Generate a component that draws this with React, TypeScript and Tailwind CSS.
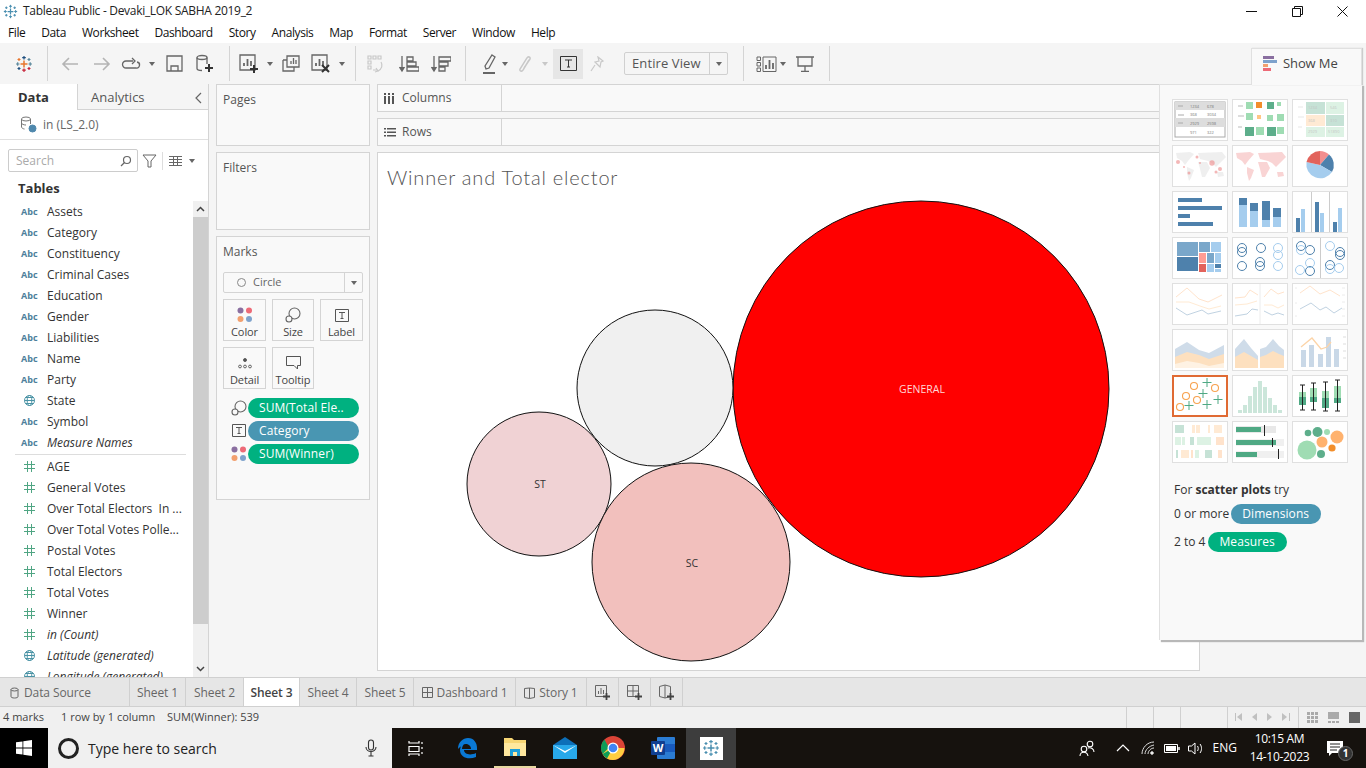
import { ReactNode } from "react";

const dims = ["Assets", "Category", "Constituency", "Criminal Cases", "Education", "Gender", "Liabilities", "Name", "Party", "State", "Symbol", "Measure Names"];
const measures = ["AGE", "General Votes", "Over Total Electors  In ...", "Over Total Votes Polle...", "Postal Votes", "Total Electors", "Total Votes", "Winner", "in (Count)", "Latitude (generated)", "Longitude (generated)"];
const menus = ["File", "Data", "Worksheet", "Dashboard", "Story", "Analysis", "Map", "Format", "Server", "Window", "Help"];

const ui = "font-['Open_Sans',sans-serif]";
const land = "M4 8 18 7l4 2-6 7-3 4-3-4-5-3zM15 22l7 3-3 8-2 3-2-8zM26 8l24-1 4 5-6 6-4 4-4-4-4-2-8-2zM26 17h9l3 6-5 9h-3l-2-8zM45 27h6l1 4-6 1z";

function Caret({ light }: { light?: boolean }) {
  return <span className={`inline-block h-0 w-0 border-x-[3.5px] border-t-[4px] border-x-transparent ${light ? "border-t-[#c8c8c8]" : "border-t-[#666]"}`} />;
}

function Slot({ w, children }: { w: string; children?: ReactNode }) {
  return <div className={`flex h-full shrink-0 items-center justify-center ${w}`}>{children}</div>;
}

function Sep() {
  return <div className="h-[35px] w-px shrink-0 bg-[#d4d4d4]" />;
}

function Ic({ w = 24, h = 24, children }: { w?: number; h?: number; children: ReactNode }) {
  return (
    <svg width={w} height={h} viewBox={`0 0 ${w} ${h}`} fill="none" stroke="#666" strokeWidth="1.3">
      {children}
    </svg>
  );
}

function Plus({ x, y }: { x: number; y: number }) {
  return <path d={`M${x - 4} ${y}h8M${x} ${y - 4}v8`} stroke="#333" strokeWidth="2" />;
}

function TableauLogo({ size = 18, mono }: { size?: number; mono?: boolean }) {
  const a = mono ? "#4a8fb0" : "#e8762d";
  const b = mono ? "#4a8fb0" : "#1f4f7f";
  const c = mono ? "#4a8fb0" : "#c72037";
  const d = mono ? "#4a8fb0" : "#5b879b";
  const e = mono ? "#4a8fb0" : "#59879b";
  return (
    <svg width={size} height={size} viewBox="0 0 18 18" fill="none" strokeWidth="1.2">
      <path d="M9 5.500v7M5.500 9h7" stroke={a} strokeWidth="1.500" />
      <path d="M9 1v3.500M7.200 2.700h3.600" stroke={b} />
      <path d="M9 13.500V17M7.200 15.200h3.600" stroke={c} />
      <path d="M1 9h3.500M2.700 7.200v3.600" stroke={d} />
      <path d="M13.500 9H17M15.200 7.200v3.600" stroke={e} />
      <path d="M4 3v3M2.500 4.500h3" stroke={a} />
      <path d="M14 3v3M12.500 4.500h3" stroke={d} />
      <path d="M4 12v3M2.500 13.500h3" stroke={b} />
      <path d="M14 12v3M12.500 13.500h3" stroke={c} />
    </svg>
  );
}

function Toolbar() {
  return (
    <div className="flex h-[41px] shrink-0 items-center bg-[#f5f5f5]">
      <Slot w="w-[47px]"><TableauLogo /></Slot>
      <Sep />
      <div className="w-[6px] shrink-0" />
      <Slot w="w-[32px]">
        <Ic w={18} h={16}><path d="M17 8H2M8 2 2 8l6 6" stroke="#b4b4b4" strokeWidth="1.600" /></Ic>
      </Slot>
      <Slot w="w-[32px]">
        <Ic w={18} h={16}><path d="M1 8h15M10 2l6 6-6 6" stroke="#b4b4b4" strokeWidth="1.600" /></Ic>
      </Slot>
      <Slot w="w-[26px]">
        <Ic w={20} h={14}><path d="M12 4H5a3 3 0 0 0 0 7h10a3 3 0 0 0 1-6" /><path d="m11 1 3 3-3 3" /></Ic>
      </Slot>
      <Slot w="w-[16px]"><Caret /></Slot>
      <Slot w="w-[28px]">
        <Ic w={17} h={17}><path d="M1 1h15v15H1zM5 16v-5h7v5" /></Ic>
      </Slot>
      <Slot w="w-[34px]">
        <Ic w={22} h={20}><ellipse cx="8" cy="3.500" rx="5" ry="2" /><path d="M3 3.500v11c0 1 1.500 2 5 2M13 3.500V10" /><Plus x={15} y={14} /></Ic>
      </Slot>
      <div className="w-[7px] shrink-0" />
      <Sep />
      <div className="w-[8px] shrink-0" />
      <Slot w="w-[24px]">
        <Ic w={22} h={20}><path d="M1 1h15v15H1z" /><path d="M5 12V9M8.500 12V5M12 12V7" strokeWidth="1.800" /><Plus x={15} y={15} /></Ic>
      </Slot>
      <Slot w="w-[16px]"><Caret /></Slot>
      <Slot w="w-[26px]">
        <Ic w={18} h={17}><path d="M5 1h12v11H5z" /><path d="M1 5h4M1 5v11h11v-4" /><path d="M9 9V6M11.500 9V3M14 9V5" /></Ic>
      </Slot>
      <div className="w-[4px] shrink-0" />
      <Slot w="w-[28px]">
        <Ic w={22} h={20}><path d="M1 1h15v15H1z" /><path d="M5 12V9M8.500 12V5M12 12V7" strokeWidth="1.800" /><path d="m11 11 7 7m0-7-7 7" stroke="#333" strokeWidth="2" /></Ic>
      </Slot>
      <Slot w="w-[12px]"><Caret /></Slot>
      <div className="w-[7px] shrink-0" />
      <Sep />
      <Slot w="w-[40px]">
        <svg width="18" height="18" viewBox="0 0 18 18" fill="none" stroke="#c8c8c8" strokeWidth="1.200"><path d="M1 1h3v3H1zM6 1h3v3H6zM11 1h3v3h-3zM1 6h3v3H1zM1 11h3v3H1zM6 15h4M14 7c2 3 1 7-3 9" /><path d="m9 13 2 3-3 1" /></svg>
      </Slot>
      <Slot w="w-[26px]">
        <Ic w={20} h={18}><path d="M3 1v14M.5 12 3 16l2.500-4" fill="#666" /><path d="M8 2h6v4H8zM8 7h9v4H8zM8 12h12v4H8z" /></Ic>
      </Slot>
      <Slot w="w-[38px]">
        <Ic w={20} h={18}><path d="M3 1v14M.5 12 3 16l2.500-4" fill="#666" /><path d="M8 2h12v4H8zM8 7h9v4H8zM8 12h6v4H8z" /></Ic>
      </Slot>
      <div className="w-[5px] shrink-0" />
      <Sep />
      <div className="w-[11px] shrink-0" />
      <Slot w="w-[24px]">
        <Ic w={14} h={20}><path d="M10 1l3 2-6 11-3 1-1-3z" /><path d="M1 19h12" strokeWidth="2" /></Ic>
      </Slot>
      <Slot w="w-[8px]"><Caret /></Slot>
      <Slot w="w-[32px]">
        <svg width="14" height="18" viewBox="0 0 14 18" fill="none" stroke="#c8c8c8" strokeWidth="1.500"><path d="M11 5 5 15c-1 2-4 1-3-1l7-11c1-2 4-1 3 1l-6 9" /></svg>
      </Slot>
      <Slot w="w-[8px]"><Caret light /></Slot>
      <div className="w-[4px] shrink-0" />
      <div className="flex h-[30px] w-[30px] shrink-0 items-center justify-center bg-[#e6e6e6]">
        <svg width="17" height="15" viewBox="0 0 17 15" fill="none" stroke="#333" strokeWidth="1"><path d="M.5.500h16v14H.500zM5 4h7M8.500 4v7M7 11h3" /></svg>
      </div>
      <Slot w="w-[28px]">
        <svg width="14" height="16" viewBox="0 0 14 16" fill="none" stroke="#c8c8c8" strokeWidth="1.200"><path d="m8 1 5 4-2 1-1 5-5-5 4-1zM5 9l-4 6" /></svg>
      </Slot>
      <div className="w-[13px] shrink-0" />
      <div className="flex h-[23px] w-[104px] shrink-0 items-center rounded-[2px] border border-[#d0d0d0] bg-[#f5f5f5]">
        <span className={`flex-1 pl-[7px] text-[13px] tracking-[0.1px] text-[#555] ${ui}`}>Entire View</span>
        <span className="flex h-full w-[18px] items-center justify-center border-l border-[#d0d0d0]"><Caret /></span>
      </div>
      <div className="w-[15px] shrink-0" />
      <Sep />
      <div className="w-[12px] shrink-0" />
      <Slot w="w-[21px]">
        <Ic w={21} h={16}><path d="M1 1h3.500v3.500H1zM1 6.500h3.500V10H1zM1 12h3.500v3.500H1zM7 1h13v14.500H7z" strokeWidth="1" /><path d="M10 13V9M13.500 13V4M17 13V7" strokeWidth="1.800" /></Ic>
      </Slot>
      <Slot w="w-[12px]"><Caret /></Slot>
      <Slot w="w-[32px]">
        <Ic w={18} h={16}><path d="M0 1h18M2 1v9h14V1M9 10v5M5 15.500h8" /></Ic>
      </Slot>
      <div className="w-[8px] shrink-0" />
      <Sep />
    </div>
  );
}

function FieldIcon({ kind }: { kind: "abc" | "geo" | "num" }) {
  if (kind === "abc") return <span className={`w-[26px] text-[9px] font-bold leading-none text-[#4d7f9b] ${ui}`}>Abc</span>;
  const color = kind === "geo" ? "#4a93a5" : "#4fa583";
  return (
    <span className="flex w-[26px] pl-[3px]">
      {kind === "num" ? (
        <svg width="11" height="11" viewBox="0 0 11 11" fill="none" stroke={color} strokeWidth="1">
          <path d="M3.500 0v11M7.500 0v11M0 3.500h11M0 7.500h11" />
        </svg>
      ) : (
        <svg width="11" height="11" viewBox="0 0 11 11" fill="none" stroke={color} strokeWidth="1">
          <circle cx="5.500" cy="5.500" r="5" />
          <ellipse cx="5.500" cy="5.500" rx="2.300" ry="5" />
          <path d="M.5 5.500h10M1.500 2.500h8M1.500 8.500h8" />
        </svg>
      )}
    </span>
  );
}

function FieldRow({ name, kind, italic }: { name: string; kind: "abc" | "geo" | "num"; italic?: boolean }) {
  return (
    <div className={`flex h-[21px] shrink-0 items-center pl-[21px] text-[12px] text-[#333] ${ui}`}>
      <FieldIcon kind={kind} />
      <span className={`whitespace-pre ${italic ? "italic" : ""}`}>{name}</span>
    </div>
  );
}

function DataPane() {
  return (
    <div className="flex w-[209px] shrink-0 flex-col overflow-hidden border-r border-[#d4d4d4] bg-white">
      <div className={`flex h-[26px] shrink-0 text-[13px] ${ui}`}>
        <div className="flex w-[77px] items-center pl-[18px] pt-[2px] font-bold text-[#333]">Data</div>
        <div className="flex flex-1 items-center justify-between border-b border-l border-[#d4d4d4] bg-[#f5f5f5] pl-[13px] pr-[6px] pt-[2px] text-[#555]">
          <span>Analytics</span>
          <svg width="8" height="12" viewBox="0 0 8 12" fill="none" stroke="#666" strokeWidth="1.200"><path d="M7 1 2 6l5 5" /></svg>
        </div>
      </div>
      <div className={`flex h-[30px] shrink-0 items-center border-b border-[#e0e0e0] pl-[20px] text-[12px] text-[#666] ${ui}`}>
        <svg width="17" height="17" viewBox="0 0 17 17" fill="none" stroke="#777" strokeWidth="1">
          <ellipse cx="6" cy="3" rx="4.500" ry="2" />
          <path d="M1.500 3v8c0 1 2 2 3 2M10.500 3v5M1.500 7c0 1 2 2 4.500 2" />
          <circle cx="12.500" cy="12.500" r="3.500" fill="#4f88ad" stroke="#4f88ad" />
        </svg>
        <span className="ml-[6px]">in (LS_2.0)</span>
      </div>
      <div className="flex h-[41px] shrink-0 items-center pl-[8px]">
        <div className="flex h-[23px] w-[130px] items-center justify-between rounded-[2px] border border-[#ccc] pl-[7px] pr-[5px]">
          <span className={`text-[12px] text-[#aaa] ${ui}`}>Search</span>
          <svg width="12" height="12" viewBox="0 0 12 12" fill="none" stroke="#666" strokeWidth="1.200"><circle cx="7" cy="5" r="3.500" /><path d="M4.500 7.500 1 11" /></svg>
        </div>
        <svg className="ml-[4px]" width="15" height="14" viewBox="0 0 15 14" fill="none" stroke="#666" strokeWidth="1"><path d="M1 1h13L9 7v6H6V7z" /></svg>
        <div className="ml-[5px] h-[18px] w-px bg-[#ddd]" />
        <svg className="ml-[6px]" width="13" height="10" viewBox="0 0 13 10" fill="none" stroke="#666" strokeWidth="1"><path d="M0 .5h13M0 3.500h13M0 6.500h13M0 9.500h13M4.500 0v10M8.500 0v10" /></svg>
        <span className="ml-[7px] flex"><Caret /></span>
      </div>
      <div className={`flex h-[16px] shrink-0 items-center pl-[18px] text-[13px] font-bold text-[#333] ${ui}`}>Tables</div>
      <div className="relative min-h-0 flex-1 overflow-hidden pt-[4px]">
        {dims.map((d, i) => (
          <FieldRow key={d} name={d} kind={d === "State" ? "geo" : "abc"} italic={i === 11} />
        ))}
        <div className="mb-px ml-[15px] mt-px h-px w-[171px] bg-[#ddd]" />
        {measures.map((m, i) => (
          <FieldRow key={m} name={m} kind={i >= 9 ? "geo" : "num"} italic={i >= 8} />
        ))}
        <div className="absolute bottom-0 right-0 top-[4px] flex w-[15px] flex-col bg-[#f0f0f0]">
          <div className="flex h-[16px] items-center justify-center">
            <svg width="9" height="6" viewBox="0 0 9 6" fill="none" stroke="#444" strokeWidth="1.500"><path d="m1 5 3.500-3.500L8 5" /></svg>
          </div>
          <div className="h-[407px] bg-[#cdcdcd]" />
          <div className="flex-1" />
          <div className="flex h-[16px] items-center justify-center">
            <svg width="9" height="6" viewBox="0 0 9 6" fill="none" stroke="#444" strokeWidth="1.500"><path d="m1 1 3.500 3.500L8 1" /></svg>
          </div>
        </div>
      </div>
    </div>
  );
}

function Card({ title, h, children }: { title: string; h: string; children?: ReactNode }) {
  return (
    <div className={`shrink-0 border border-[#d4d4d4] bg-[#f9f9f9] ${h}`}>
      <div className={`pl-[6px] pt-[7px] text-[12px] leading-[16px] text-[#555] ${ui}`}>{title}</div>
      {children}
    </div>
  );
}

function Dots() {
  return (
    <svg width="16" height="16" viewBox="0 0 16 16">
      <circle cx="3.500" cy="3.500" r="3" fill="#8a6fa0" />
      <circle cx="12" cy="3.500" r="3" fill="#ed6a77" />
      <circle cx="3.500" cy="12" r="3" fill="#f2a06f" />
      <circle cx="12" cy="12" r="3" fill="#7ea2cc" />
    </svg>
  );
}

function SizeIcon() {
  return (
    <svg width="16" height="16" viewBox="0 0 16 16" fill="none" stroke="#666" strokeWidth="1.100">
      <circle cx="9.500" cy="6.500" r="5.500" />
      <circle cx="4" cy="12" r="3" fill="#f9f9f9" />
    </svg>
  );
}

function TextIcon({ w = 14, h = 13 }: { w?: number; h?: number }) {
  return (
    <svg width={w} height={h} viewBox="0 0 14 13" fill="none" stroke="#555" strokeWidth="1">
      <path d="M.5.500h13v12H.500zM4 3.500h6M7 3.500v6M5.500 9.500h3" />
    </svg>
  );
}

function MarkBtn({ label, w, children }: { label: string; w: string; children: ReactNode }) {
  return (
    <div className={`flex h-[42px] flex-col items-center border border-[#d4d4d4] pt-[6px] ${w}`}>
      <div className="flex h-[18px] items-center">{children}</div>
      <span className={`text-[11px] leading-[15px] tracking-[-0.1px] text-[#444] ${ui}`}>{label}</span>
    </div>
  );
}

function Pill({ color, w, children }: { color: string; w?: string; children: ReactNode }) {
  return (
    <div className={`flex h-[20px] items-center rounded-full pl-[11px] text-[12px] leading-none tracking-[0.1px] text-white ${w ?? ""} ${color} ${ui}`}>
      {children}
    </div>
  );
}

function MarkPill({ icon, color, label }: { icon: ReactNode; color: string; label: string }) {
  return (
    <div className="flex h-[23px] items-center pl-[13px]">
      <span className="flex w-[18px] justify-center">{icon}</span>
      <Pill color={color} w="w-[111px]">{label}</Pill>
    </div>
  );
}

function CardsColumn() {
  return (
    <div className="flex w-[154px] shrink-0 flex-col gap-[6px]">
      <Card title="Pages" h="h-[62px]" />
      <Card title="Filters" h="h-[78px]" />
      <Card title="Marks" h="h-[264px]">
        <div className="px-[6px] pt-[12px]">
          <div className="flex h-[21px] items-center rounded-[2px] border border-[#d4d4d4]">
            <span className="ml-[13px] h-[9px] w-[9px] rounded-full border border-[#888]" />
            <span className={`ml-[7px] flex-1 text-[11px] text-[#666] ${ui}`}>Circle</span>
            <span className="flex h-full w-[18px] items-center justify-center border-l border-[#d4d4d4]"><Caret /></span>
          </div>
          <div className="mt-[6px] flex gap-[6px]">
            <MarkBtn label="Color" w="w-[43px]"><Dots /></MarkBtn>
            <MarkBtn label="Size" w="w-[42px]"><SizeIcon /></MarkBtn>
            <MarkBtn label="Label" w="w-[43px]"><TextIcon /></MarkBtn>
          </div>
          <div className="mt-[6px] flex gap-[6px]">
            <MarkBtn label="Detail" w="w-[43px]">
              <svg width="14" height="11" viewBox="0 0 14 11" fill="none" stroke="#555" strokeWidth=".9">
                <circle cx="7" cy="2" r="1.500" fill="#555" /><circle cx="2" cy="8.500" r="1.400" /><circle cx="7" cy="8.500" r="1.400" /><circle cx="12" cy="8.500" r="1.400" />
              </svg>
            </MarkBtn>
            <MarkBtn label="Tooltip" w="w-[42px]">
              <svg width="15" height="14" viewBox="0 0 15 14" fill="none" stroke="#555" strokeWidth="1"><path d="M.5.500h14v9h-3v3.500l-3.500-3.500H.500z" /></svg>
            </MarkBtn>
          </div>
        </div>
        <div className="pt-[7px]">
          <MarkPill icon={<SizeIcon />} color="bg-[#00b180]" label="SUM(Total Ele.." />
          <MarkPill icon={<TextIcon />} color="bg-[#4996b2]" label="Category" />
          <MarkPill icon={<Dots />} color="bg-[#00b180]" label="SUM(Winner)" />
        </div>
      </Card>
    </div>
  );
}

function Shelf({ label, icon }: { label: string; icon: ReactNode }) {
  return (
    <div className="flex h-[28px] shrink-0 items-stretch border border-[#d4d4d4] bg-[#f9f9f9]">
      <div className={`flex w-[124px] shrink-0 items-center border-r border-[#d4d4d4] pl-[6px] text-[12px] text-[#555] ${ui}`}>
        <span className="flex w-[18px]">{icon}</span>
        {label}
      </div>
    </div>
  );
}

function Viz() {
  return (
    <div className="relative flex min-h-0 flex-1 flex-col overflow-hidden border border-[#d4d4d4] bg-white">
      <div className="absolute left-[9px] top-[10px] font-['Lato',sans-serif] text-[20px] font-light leading-[28px] tracking-[0.8px] text-[#555]">
        Winner and Total elector
      </div>
      <svg width="821" height="517" viewBox="378 153 821 517" className="shrink-0">
        <circle cx="921" cy="389" r="188" fill="#ff0000" stroke="#111" strokeWidth="1" />
        <circle cx="655" cy="388" r="78" fill="#f0f0f0" stroke="#111" strokeWidth="1" />
        <circle cx="539" cy="484" r="72" fill="#f0d2d4" stroke="#111" strokeWidth="1" />
        <circle cx="691" cy="562" r="99" fill="#f2c0bd" stroke="#111" strokeWidth="1" />
        <g fontFamily="'Open Sans',sans-serif" fontSize="10.500" textAnchor="middle">
          <text x="922" y="393" fill="#ffd9d9">GENERAL</text>
          <text x="540" y="488" fill="#333">ST</text>
          <text x="692" y="567" fill="#333">SC</text>
        </g>
      </svg>
    </div>
  );
}

const B = "#4e81ac";
const L = "#a5cdee";
const G = "#4fa984";
const LG = "#9fdcb3";
const O = "#f28e2b";
const LO = "#ffb26e";

function BubbleRings({ pts, color }: { pts: number[][]; color: string }) {
  return (
    <>
      {pts.map(([x, y], i) => (
        <circle key={i} cx={x} cy={y} r="4.500" fill="none" stroke={color} strokeWidth="1" />
      ))}
    </>
  );
}

function Faint({ children }: { children: ReactNode }) {
  return <g opacity="0.35">{children}</g>;
}

const thumbs: ReactNode[] = [
  <g key="t" fontFamily="'Open Sans',sans-serif" fontSize="4" fill="#777">
    <rect x="3" y="3" width="50" height="35" fill="none" stroke="#aaa" />
    <rect x="3" y="3" width="50" height="8" fill="#ddd" />
    <rect x="3" y="19" width="50" height="9" fill="#ddd" />
    <path d="M6 7h5M6 16h6M6 24h5" stroke="#aaa" />
    <text x="18" y="9">1234</text><text x="35" y="9">678</text>
    <text x="18" y="17">368</text><text x="35" y="17">3034</text>
    <text x="18" y="26">2929</text><text x="35" y="26">2598</text>
    <text x="18" y="35">971</text><text x="35" y="35">322</text>
  </g>,
  <g key="h">
    <path d="M6 7h5M6 17h6M6 28h4" stroke="#bbb" />
    <rect x="14" y="3" width="7" height="7" fill="#9fdcb3" /><rect x="24" y="3" width="6" height="6" fill={O} /><rect x="35" y="3" width="7" height="7" fill="#5dae8b" /><rect x="45" y="3" width="4" height="4" fill="#9fdcb3" />
    <rect x="14" y="14" width="7" height="7" fill="#9fdcb3" /><rect x="25" y="16" width="4" height="4" fill="#ffc685" /><rect x="35" y="16" width="6" height="6" fill="#9fdcb3" /><rect x="45" y="15" width="7" height="7" fill="#9fdcb3" />
    <rect x="13" y="28" width="9" height="9" fill="#5dae8b" /><rect x="24" y="28" width="8" height="8" fill="#9fdcb3" /><rect x="35" y="28" width="9" height="9" fill="#5dae8b" /><rect x="45" y="28" width="7" height="7" fill="#9fdcb3" />
  </g>,
  <Faint key="hl">
    <path d="M6 8h5M6 18h6M6 28h4" stroke="#bbb" />
    <rect x="14" y="3" width="19" height="12" fill="#5dae8b" /><rect x="34" y="3" width="18" height="12" fill="#9fdcb3" />
    <rect x="14" y="16" width="19" height="11" fill="#ffc685" /><rect x="34" y="16" width="18" height="11" fill="#5dae8b" />
    <rect x="14" y="28" width="19" height="10" fill="#9fdcb3" /><rect x="34" y="28" width="18" height="10" fill="#9fdcb3" />
    <g fontFamily="'Open Sans',sans-serif" fontSize="4" fill="#555">
      <text x="16" y="10">1234</text><text x="38" y="10">546</text><text x="16" y="23">368</text><text x="38" y="23">310</text><text x="16" y="34">2929</text><text x="36" y="34">51890</text>
    </g>
  </Faint>,
  <g key="sm">
    <path d={land} fill="#e8e8e8" opacity="0.7" />
    <g fill="#e88" opacity="0.6">
      <circle cx="6" cy="17" r="2" /><circle cx="25" cy="12" r="1.500" /><circle cx="40" cy="18" r="2.700" /><circle cx="48" cy="24" r="2" /><circle cx="17" cy="28" r="1.500" /><circle cx="44" cy="27" r="1.500" /><circle cx="12" cy="22" r="1" /><circle cx="28" cy="18" r="1" />
    </g>
  </g>,
  <path key="fm" d={land} fill="#f7c9c9" opacity="0.8" />,
  <g key="pie">
    <path d="M28 20 28 6a14 14 0 0 1 9 3.500z" fill="#f28e8e" />
    <path d="M28 20 37 9.500A14 14 0 0 1 40 27z" fill={B} />
    <path d="M28 20 40 27A14 14 0 0 1 14.500 17z" fill={L} />
    <path d="M28 20 14.500 17A14 14 0 0 1 28 6z" fill="#e2635c" />
  </g>,
  <g key="bars" fill={B}>
    <rect x="6" y="7" width="24" height="4" /><rect x="6" y="15" width="44" height="4" /><rect x="6" y="23" width="12" height="4" /><rect x="6" y="31" width="35" height="4" />
  </g>,
  <g key="sb">
    <rect x="7" y="7" width="8" height="7" fill={B} /><rect x="7" y="14" width="8" height="22" fill={L} />
    <rect x="18" y="12" width="8" height="8" fill={B} /><rect x="18" y="20" width="8" height="16" fill={L} />
    <rect x="30" y="10" width="8" height="19" fill={B} /><rect x="30" y="29" width="8" height="7" fill={L} />
    <rect x="41" y="17" width="8" height="9" fill={B} /><rect x="41" y="26" width="8" height="10" fill={L} />
  </g>,
  <g key="sbs">
    <path d="M19.500 1v40M37.500 1v40" stroke="#ccc" />
    <rect x="4" y="27" width="4" height="14" fill={B} /><rect x="9" y="18" width="4" height="23" fill={L} />
    <rect x="23" y="11" width="4" height="30" fill={B} /><rect x="28" y="22" width="4" height="19" fill={L} />
    <rect x="41" y="31" width="4" height="10" fill={B} /><rect x="46" y="17" width="4" height="24" fill={L} />
  </g>,
  <g key="tm">
    <rect x="5" y="5" width="21" height="14" fill="#7aa7ca" /><rect x="5" y="20" width="21" height="14" fill={B} />
    <rect x="27" y="5" width="11" height="10" fill="#7aa7ca" /><rect x="39" y="5" width="10" height="10" fill={L} />
    <rect x="27" y="16" width="7" height="10" fill="#ff9d94" /><rect x="35" y="16" width="7" height="10" fill="#7aa7ca" /><rect x="43" y="16" width="6" height="10" fill={L} />
    <rect x="27" y="27" width="7" height="8" fill="#e2635c" /><rect x="35" y="27" width="7" height="8" fill={L} /><rect x="43" y="27" width="6" height="4" fill={B} /><rect x="43" y="32" width="6" height="3" fill={L} />
  </g>,
  <g key="cv">
    <BubbleRings color={B} pts={[[10, 11], [10, 15], [29, 11], [10, 29], [28, 25], [28, 29]]} />
    <BubbleRings color={L} pts={[[46, 11], [46, 18], [46, 29]]} />
  </g>,
  <g key="cv2">
    <path d="M28.500 1v40" stroke="#ccc" />
    <BubbleRings color={B} pts={[[9, 9], [18, 13], [18, 34], [48, 15], [48, 18], [38, 28]]} />
    <BubbleRings color={L} pts={[[9, 13], [18, 26], [8, 33], [38, 9], [38, 32], [47, 31]]} />
  </g>,
  <Faint key="l1">
    <path d="M4 14 15 5l12 11 9 3 14-7" stroke={LO} fill="none" />
    <path d="M4 19h13l11 4 9 3 12-3" stroke="#ffc685" fill="none" />
    <path d="M4 25l11 7 15-5 6 4 13-3" stroke={B} fill="none" />
  </Faint>,
  <Faint key="l2">
    <path d="M28 1v40" stroke="#ccc" />
    <path d="M3 15l10-1 5-7 8 5M32 14l7-8 7 5 6-2" stroke={LO} fill="none" />
    <path d="M3 22l12-1 10-3M32 22h8l6 3 6-3" stroke="#ffc685" fill="none" />
    <path d="M3 33l12-2 5-5 6 1M32 28l8 4 6-2 6 2" stroke={B} fill="none" />
  </Faint>,
  <Faint key="l3">
    <path d="M50 5h3M50 12h3M50 19h3M50 26h3M50 33h3M3 5h2M3 20h2M3 33h2" stroke="#ccc" />
    <path d="M8 10 18 3l10 8 10-4 10 6" stroke={LO} fill="none" />
    <path d="M8 26l11-6 9 7 6-3 8 6 8-5" stroke={B} fill="none" />
  </Faint>,
  <g key="a1">
    <path d="M3 20l12-7 12 8 10 3 15-8v23H3z" fill="#cfdce9" />
    <path d="M3 28l12-5 12 3 10 4 15-5v14H3z" fill="#fde0bf" />
    <path d="M3 35l12-3 12 2 10 3 15-3v5H3z" fill="#fef2e3" />
  </g>,
  <g key="a2">
    <path d="M3 20l9-10 7 9 7 8v12H3z" fill="#cfdce9" />
    <path d="M3 28l9-5 7 4 7 4v8H3z" fill="#fde0bf" />
    <path d="M28 20l6-2 7-8 6 7 5 4v18H28z" fill="#cfdce9" />
    <path d="M28 28l6-2 7-4 6 3 5 2v12H28z" fill="#fde0bf" />
  </g>,
  <g key="cmb">
    <g fill="#c9d8e7">
      <rect x="9" y="21" width="5" height="17" /><rect x="17" y="16" width="5" height="22" /><rect x="26" y="25" width="5" height="13" /><rect x="34" y="8" width="5" height="30" /><rect x="42" y="20" width="5" height="18" />
    </g>
    <path d="M9 18 20 9l9 11 6-2 4-5" stroke="#fcd4a8" strokeWidth="1.300" fill="none" />
    <path d="M51 8h3M51 15h3M51 22h3M51 29h3" stroke="#ddd" />
  </g>,
  <g key="sc">
    <rect x="1.500" y="1.500" width="53" height="39" fill="#fff" stroke="#e06a33" strokeWidth="1" />
    <g fill="none" stroke="#f7a24e" strokeWidth="1.100">
      <circle cx="22" cy="11" r="3.500" /><circle cx="43" cy="13" r="3.500" /><circle cx="14" cy="21" r="3.500" /><circle cx="25" cy="25" r="3.500" /><circle cx="8" cy="32" r="3.500" />
    </g>
    <path d="M35 3v9M30.500 7.500h9M31 14v9M26.500 18.500h9M46 20v9M41.500 24.500h9M17 26v9M12.500 30.500h9M35 25v9M30.500 29.500h9" stroke={G} strokeWidth="1" fill="none" />
  </g>,
  <g key="hist" fill="#cbe6da">
    <rect x="6" y="35" width="4" height="3" /><rect x="11" y="30" width="4" height="8" /><rect x="16" y="21" width="4" height="17" /><rect x="21" y="12" width="4" height="26" /><rect x="26" y="6" width="4" height="32" /><rect x="31" y="12" width="4" height="26" /><rect x="36" y="23" width="4" height="15" /><rect x="41" y="30" width="4" height="8" /><rect x="46" y="35" width="4" height="3" />
  </g>,
  <g key="box">
    <rect x="7" y="17" width="7" height="12" fill={LG} /><rect x="7" y="22" width="7" height="8" fill={G} />
    <rect x="18" y="13" width="7" height="14" fill={LG} /><rect x="18" y="22" width="7" height="5" fill={G} />
    <rect x="30" y="16" width="7" height="16" fill={LG} /><rect x="30" y="23" width="7" height="10" fill={G} />
    <rect x="42" y="11" width="7" height="17" fill={LG} /><rect x="42" y="23" width="7" height="5" fill={G} />
    <path d="M8 10h5M10.500 10v25M8 35h5M19 8h5M21.500 8v27M19 35h5M31 7h5M33.500 7v29M31 36h5M43 5h5M45.500 5v31M43 36h5" stroke="#222" fill="none" />
  </g>,
  <Faint key="gantt">
    <rect x="3" y="4" width="9" height="8" fill="#5dae8b" /><rect x="20" y="4" width="3" height="8" fill="#ffc685" /><rect x="24" y="4" width="4" height="8" fill="#ffc685" /><rect x="36" y="4" width="2" height="8" fill="#ffc685" /><rect x="42" y="4" width="8" height="8" fill="#ffc685" />
    <rect x="3" y="16" width="6" height="8" fill="#9fdcb3" /><rect x="10" y="16" width="3" height="8" fill="#9fdcb3" /><rect x="18" y="16" width="4" height="8" fill="#5dae8b" /><rect x="25" y="16" width="14" height="8" fill="#9fdcb3" /><rect x="44" y="16" width="8" height="8" fill={LO} />
    <rect x="4" y="29" width="2" height="8" fill="#5dae8b" /><rect x="9" y="29" width="8" height="8" fill="#ffc685" /><rect x="19" y="29" width="2" height="8" fill={LO} /><rect x="23" y="29" width="4" height="8" fill="#9fdcb3" /><rect x="33" y="29" width="7" height="8" fill="#5dae8b" /><rect x="46" y="29" width="4" height="8" fill={LO} />
  </Faint>,
  <g key="bullet">
    <rect x="4" y="5" width="40" height="7" fill="#e8e8e8" /><rect x="4" y="6" width="25" height="5" fill={G} />
    <rect x="4" y="18" width="48" height="7" fill="#f0f0f0" /><rect x="4" y="19" width="40" height="5" fill={G} />
    <rect x="4" y="30" width="48" height="7" fill="#f0f0f0" /><rect x="4" y="31" width="21" height="5" fill={G} />
    <path d="M32.500 4v11M40.500 17v9M46.500 28v10" stroke="#222" />
  </g>,
  <g key="bub">
    <circle cx="15" cy="29" r="9.500" fill="#9fdcb3" />
    <circle cx="16" cy="12" r="3.300" fill="#5dae8b" />
    <circle cx="25.500" cy="11" r="5" fill="#5dae8b" />
    <circle cx="35" cy="11" r="3" fill="#9fdcb3" />
    <circle cx="30" cy="21" r="5.500" fill={LO} />
    <circle cx="45" cy="16" r="6.500" fill={LO} />
    <circle cx="40" cy="27" r="3.600" fill={O} />
    <circle cx="29" cy="33" r="4" fill="#5dae8b" />
  </g>,
];

function ShowMePanel() {
  return (
    <div className="absolute right-[4px] top-[48px] z-10 flex flex-col items-end">
      <div className="relative z-10 -mb-px flex h-[37px] w-[111px] items-center gap-[5px] border-x border-t border-[#e0e0e0] bg-[#f9f9f9] pb-[6px] pl-[11px] shadow-[1px_0_1px_#ccc]">
        <svg width="15" height="16" viewBox="0 0 15 16">
          <rect width="11" height="3" fill="#8a6fa0" />
          <rect y="4" width="14" height="3" fill="#7ea2cc" />
          <rect y="8" width="5" height="3" fill="#f2a06f" />
          <rect y="12" width="8" height="3" fill="#ed6a77" />
        </svg>
        <span className={`text-[13px] tracking-[-0.1px] text-[#444] ${ui}`}>Show Me</span>
      </div>
      <div className={`h-[556px] w-[203px] border-l border-t border-[#e0e0e0] bg-[#f9f9f9] pl-[12px] pt-[14px] shadow-[2px_2px_1px_#b8b8b8] ${ui}`}>
        <div className="grid grid-cols-[repeat(3,56px)] gap-[4px]">
          {thumbs.map((t, i) => (
            <div key={i} className={`h-[42px] w-[56px] border bg-white ${i === 18 ? "border-[#e06a33]" : "border-[#e0e0e0]"}`}>
              <svg width="54" height="40" viewBox="1 1 54 40" className="block overflow-hidden">{t}</svg>
            </div>
          ))}
        </div>
        <div className="mt-[17px] pl-[2px] text-[12px] leading-[20px] text-[#333]">
          For <b>scatter plots</b> try
        </div>
        <div className="mt-[4px] flex items-center gap-[2px] pl-[2px] text-[12px] text-[#333]">
          0 or more
          <Pill color="bg-[#4996b2]" w="w-[90px]">Dimensions</Pill>
        </div>
        <div className="mt-[8px] flex items-center gap-[3px] pl-[2px] text-[12px] text-[#333]">
          2 to 4
          <Pill color="bg-[#00b180]" w="w-[79px]">Measures</Pill>
        </div>
      </div>
    </div>
  );
}

function AddIcon({ kind }: { kind: "sheet" | "dash" | "story" }) {
  return (
    <svg width="17" height="17" viewBox="0 0 17 17" fill="none" stroke="#666" strokeWidth="1">
      {kind === "sheet" && <path d="M1.500 1.500h11v11h-11zM4.500 10V7M7 10V4M9.500 10V6" />}
      {kind === "dash" && <path d="M1.500 1.500h11v11h-11zM7 1.500v11M1.500 7h11" />}
      {kind === "story" && <path d="M1.500 2.500 7 1l5.500 1.500v10L7 14l-5.500-1.500zM7 1v13" />}
      <path d="M12.500 9v7M9 12.500h7" stroke="#444" strokeWidth="1.800" />
    </svg>
  );
}

function Tab({ w, label, active, icon }: { w: string; label?: string; active?: boolean; icon?: ReactNode }) {
  return (
    <div className={`flex h-full shrink-0 items-center justify-center gap-[4px] border-r border-[#d0d0d0] pt-px text-[12px] tracking-[-0.1px] ${w} ${ui} ${active ? "bg-white font-semibold text-[#444]" : "text-[#666]"}`}>
      {icon}
      {label}
    </div>
  );
}

function TabStrip() {
  return (
    <div className="flex h-[30px] shrink-0 border-y border-[#d0d0d0] bg-[#e6e6e6]">
      <Tab
        w="w-[130px] !justify-start !gap-[5px] pl-[10px]"
        label="Data Source"
        icon={<svg width="9" height="12" viewBox="0 0 9 12" fill="none" stroke="#666"><ellipse cx="4.500" cy="2.500" rx="3.500" ry="1.500" /><path d="M1 2.500v7c0 1 1.500 1.500 3.500 1.500S8 10.500 8 9.500v-7" /></svg>}
      />
      <Tab w="w-[56px]" label="Sheet 1" />
      <Tab w="w-[58px]" label="Sheet 2" />
      <Tab w="w-[56px]" label="Sheet 3" active />
      <Tab w="w-[57px]" label="Sheet 4" />
      <Tab w="w-[57px]" label="Sheet 5" />
      <Tab w="w-[102px]" label="Dashboard 1" icon={<svg width="11" height="11" viewBox="0 0 11 11" fill="none" stroke="#666"><path d="M.5.500h10v10H.500zM5.500.500v10M.5 5.500h10" /></svg>} />
      <Tab w="w-[71px]" label="Story 1" icon={<svg width="11" height="12" viewBox="0 0 11 12" fill="none" stroke="#666"><path d="M.5 1.500 5.500 1l5 .500v9l-5 1-5-1zM5.500 1v10.500" /></svg>} />
      <Tab w="w-[32px]" icon={<AddIcon kind="sheet" />} />
      <Tab w="w-[32px]" icon={<AddIcon kind="dash" />} />
      <Tab w="w-[32px]" icon={<AddIcon kind="story" />} />
    </div>
  );
}

function StatusBar() {
  return (
    <div className={`flex h-[21px] shrink-0 items-center bg-[#f0f0f0] text-[11px] text-[#444] ${ui}`}>
      <span className="w-[61px] shrink-0 pl-[3px]">4 marks</span>
      <span className="w-[106px] shrink-0">1 row by 1 column</span>
      <span className="flex-1">SUM(Winner): 539</span>
      <div className="h-full w-[27px] border-l border-[#d0d0d0]" />
      <div className="h-full w-[27px] border-l border-[#d0d0d0]" />
      <div className="h-full w-[47px] border-l border-[#d0d0d0]" />
      <div className="flex h-full w-[71px] items-center justify-center border-l border-[#d0d0d0]">
        <svg width="56" height="9" viewBox="0 0 56 9" fill="#c0c0c0"><path d="M0 0h1v8H0zM7 0v8L2 4zM22 0v8l-5-4zM32 0v8l5-4zM47 0v8l5-4zM54 0h1v8h-1z" /></svg>
      </div>
      <div className="flex h-full w-[68px] items-center gap-[10px] border-l border-[#d0d0d0] pl-[8px]">
        <svg width="11" height="11" viewBox="0 0 11 11" fill="#aaa"><path d="M0 0h3v3H0zM4 0h3v3H4zM8 0h3v3H8zM0 4h3v3H0zM4 4h3v3H4zM8 4h3v3H8zM0 8h3v3H0zM4 8h3v3H4zM8 8h3v3H8z" /></svg>
        <svg width="11" height="11" viewBox="0 0 11 11" fill="#aaa"><path d="M0 0h11v7H0zM0 9h3v2H0zM4 9h3v2H4zM8 9h3v2H8z" /></svg>
        <span className="h-[11px] w-[11px] bg-[#666]" />
      </div>
    </div>
  );
}

function Taskbar() {
  return (
    <div className="flex h-[40px] shrink-0 items-center bg-[#16120e] text-white">
      <div className="flex h-full w-[48px] shrink-0 items-center justify-center bg-black">
        <svg width="16" height="16" viewBox="0 0 16 16" fill="#fff"><path d="M0 2.300 6.500 1.400v6.200H0zM7.300 1.300 16 0v7.600H7.300zM0 8.400h6.500v6.200L0 13.700zM7.300 8.400H16V16l-8.700-1.200z" /></svg>
      </div>
      <div className="flex h-full w-[344px] shrink-0 items-center bg-[#f0f0f0] pl-[10px]">
        <span className="h-[21px] w-[21px] rounded-full border-[3px] border-[#222]" />
        <span className={`ml-[9px] flex-1 text-[14px] text-[#222] ${ui}`}>Type here to search</span>
        <svg className="mr-[15px]" width="12" height="18" viewBox="0 0 12 18" fill="none" stroke="#333" strokeWidth="1.100"><rect x="3.500" y="1" width="5" height="10" rx="2.500" /><path d="M1 8c0 6 10 6 10 0M6 13v4M3.500 17h5" /></svg>
      </div>
      <div className="flex h-full flex-1 items-center">
        <Slot w="w-[48px]">
          <svg width="16" height="15" viewBox="0 0 16 15" fill="none" stroke="#fff" strokeWidth="1.200"><path d="M1 0v2h10V0M1 5.500h10v5H1zM1 15v-2h10v2M14 1v2M14 6v2M14 11v2" /></svg>
        </Slot>
        <Slot w="w-[54px]">
          <svg width="22" height="22" viewBox="0 0 22 22"><path d="M2 12C2 5 7 1 12 1c6 0 9 5 9 10v2H8c0 4 6 6 12 3v4c-7 3-16 1-16-7 0-3 2-6 5-7-2 2-3 4-3 6h9c0-5-6-6-8-4-2 1-4 3-5 4z" fill="#0a78d4" /></svg>
        </Slot>
        <div className="flex h-full w-[42px] shrink-0 items-center justify-center border-b-2 border-[#e8d8a0]">
          <svg width="22" height="20" viewBox="0 0 22 20"><path d="M0 1h8l2 2h12v16H0z" fill="#f7d674" /><path d="M0 6h22v13H0z" fill="#ffe89e" /><path d="M6 19v-7h10v7h-3v-4H9v4z" fill="#1f9fd8" /></svg>
        </div>
        <Slot w="w-[58px]">
          <svg width="24" height="22" viewBox="0 0 24 22"><path d="M0 8 12 0l12 8v14H0z" fill="#0d6fb8" /><path d="M0 8h24v14H0z" fill="#28a8ea" /><path d="M0 8l12 8 12-8-12 6z" fill="#fff" /></svg>
        </Slot>
        <Slot w="w-[38px]">
          <svg width="24" height="24" viewBox="0 0 24 24">
            <circle cx="12" cy="12" r="12" fill="#db4437" />
            <path d="M12 12 1.600 18A12 12 0 0 1 3.500 3.500L8 12z" fill="#0f9d58" />
            <path d="M12 12h11.500A12 12 0 0 1 12 24a12 12 0 0 1-10.400-6l6-6z" fill="#ffcd40" />
            <path d="M12 12 6 22.400A12 12 0 0 1 1.600 18z" fill="#0f9d58" />
            <circle cx="12" cy="12" r="5.500" fill="#fff" />
            <circle cx="12" cy="12" r="4.300" fill="#4285f4" />
          </svg>
        </Slot>
        <div className="w-[8px] shrink-0" />
        <Slot w="w-[46px]">
          <svg width="24" height="22" viewBox="0 0 24 22">
            <rect x="6" y="0" width="18" height="22" rx="1" fill="#2b7cd3" />
            <rect x="6" y="7" width="18" height="8" fill="#185abd" />
            <rect x="0" y="4" width="14" height="14" rx="1" fill="#103f91" />
            <text x="7" y="15" textAnchor="middle" fontSize="11" fontWeight="700" fontFamily="'Open Sans',sans-serif" fill="#fff">W</text>
          </svg>
        </Slot>
        <div className="flex h-full w-[50px] shrink-0 items-center justify-center bg-[#3d3d3d]">
          <span className="flex h-[23px] w-[23px] items-center justify-center bg-white"><TableauLogo mono /></span>
        </div>
      </div>
      <div className="flex h-full items-center">
        <svg className="mr-[21px]" width="16" height="17" viewBox="0 0 16 17" fill="none" stroke="#fff" strokeWidth="1.100"><circle cx="5" cy="9" r="2.800" /><circle cx="11" cy="4" r="2.800" /><path d="M1 16c0-5 7-5 8 0M9 8c3-1 6 1 6 4" /></svg>
        <svg className="mr-[11px]" width="14" height="8" viewBox="0 0 14 8" fill="none" stroke="#fff" strokeWidth="1.200"><path d="m1 7 6-6 6 6" /></svg>
        <svg className="mr-[9px]" width="14" height="14" viewBox="0 0 14 14" fill="none" stroke="#ddd" strokeWidth="1"><path d="M1 13C1 7 6 1 13 1M4 13c0-4 4-8 9-9M7 13c0-3 3-6 6-6" /><circle cx="11" cy="12" r="1.300" fill="#fff" /></svg>
        <svg className="mr-[8px]" width="16" height="9" viewBox="0 0 16 9" fill="none" stroke="#fff"><path d="M.5.500h13v8H.500z" /><path d="M2 2h10v5H2z" fill="#fff" stroke="none" /><path d="M15 3v3" strokeWidth="1.500" /></svg>
        <svg className="mr-[9px]" width="16" height="13" viewBox="0 0 16 13" fill="none" stroke="#fff"><path d="M.5 4h3L7 1v11L3.500 9h-3zM9.500 4c1 1.500 1 3.500 0 5M12 2c2 2.500 2 6.500 0 9" /></svg>
        <span className={`mr-[13px] text-[12px] text-white ${ui}`}>ENG</span>
        <div className={`flex w-[59px] flex-col items-center whitespace-nowrap text-[12px] leading-[18px] tracking-[-0.3px] text-white ${ui}`}>
          <span>10:15 AM</span>
          <span>14-10-2023</span>
        </div>
        <div className="relative ml-[18px] mr-[17px] h-[22px] w-[22px]">
          <svg width="16" height="15" viewBox="0 0 16 15" fill="#fff" className="mt-[4px]"><path d="M0 0h16v12H5l-3 3v-3H0z" /><path d="M3 3h10M3 6h10M3 9h7" stroke="#222" /></svg>
          <span className={`absolute bottom-[-2px] right-[-4px] flex h-[15px] w-[15px] items-center justify-center rounded-full border border-[#666] bg-[#333] text-[10px] font-bold text-white ${ui}`}>1</span>
        </div>
      </div>
    </div>
  );
}

export default function App() {
  return (
    <div className="relative flex h-[768px] w-[1366px] flex-col overflow-hidden bg-[#f5f5f5]">
      <div className="flex h-[22px] shrink-0 items-center bg-white pl-[3px]">
        <TableauLogo size={15} mono />
        <span className={`ml-[5px] flex-1 text-[12px] tracking-[-0.3px] text-[#222] ${ui}`}>Tableau Public - Devaki_LOK SABHA 2019_2</span>
        <Slot w="w-[48px]"><svg width="11" height="1"><path d="M0 .5h11" stroke="#111" /></svg></Slot>
        <Slot w="w-[44px]"><svg width="11" height="11" viewBox="0 0 11 11" fill="none" stroke="#111"><path d="M.5 2.500h8v8h-8zM2.500 2.500v-2h8v8h-2" /></svg></Slot>
        <Slot w="w-[47px]"><svg width="11" height="11" viewBox="0 0 11 11" fill="none" stroke="#111"><path d="m.5.500 10 10m0-10-10 10" /></svg></Slot>
      </div>
      <div className={`flex h-[21px] shrink-0 items-center gap-[16px] bg-white pl-[8px] text-[12px] tracking-[-0.42px] text-[#111] ${ui}`}>
        {menus.map((m) => (
          <span key={m}>{m}</span>
        ))}
      </div>
      <Toolbar />
      <div className="flex min-h-0 flex-1">
        <DataPane />
        <div className="w-[7px] shrink-0" />
        <CardsColumn />
        <div className="w-[7px] shrink-0" />
        <div className="flex w-[823px] shrink-0 flex-col gap-[6px] pb-[6px]">
          <Shelf label="Columns" icon={<svg width="10" height="11" viewBox="0 0 10 11" fill="#555"><path d="M0 3h2v8H0zM4 3h2v8H4zM8 3h2v8H8zM0 0h2v2H0zM4 0h2v2H4zM8 0h2v2H8z" /></svg>} />
          <Shelf label="Rows" icon={<svg width="12" height="9" viewBox="0 0 12 9" fill="#555"><path d="M3 0h9v1.500H3zM3 3.500h9V5H3zM3 7h9v1.500H3zM0 0h2v1.500H0zM0 3.500h2V5H0zM0 7h2v1.500H0z" /></svg>} />
          <Viz />
        </div>
      </div>
      <ShowMePanel />
      <TabStrip />
      <StatusBar />
      <Taskbar />
    </div>
  );
}
